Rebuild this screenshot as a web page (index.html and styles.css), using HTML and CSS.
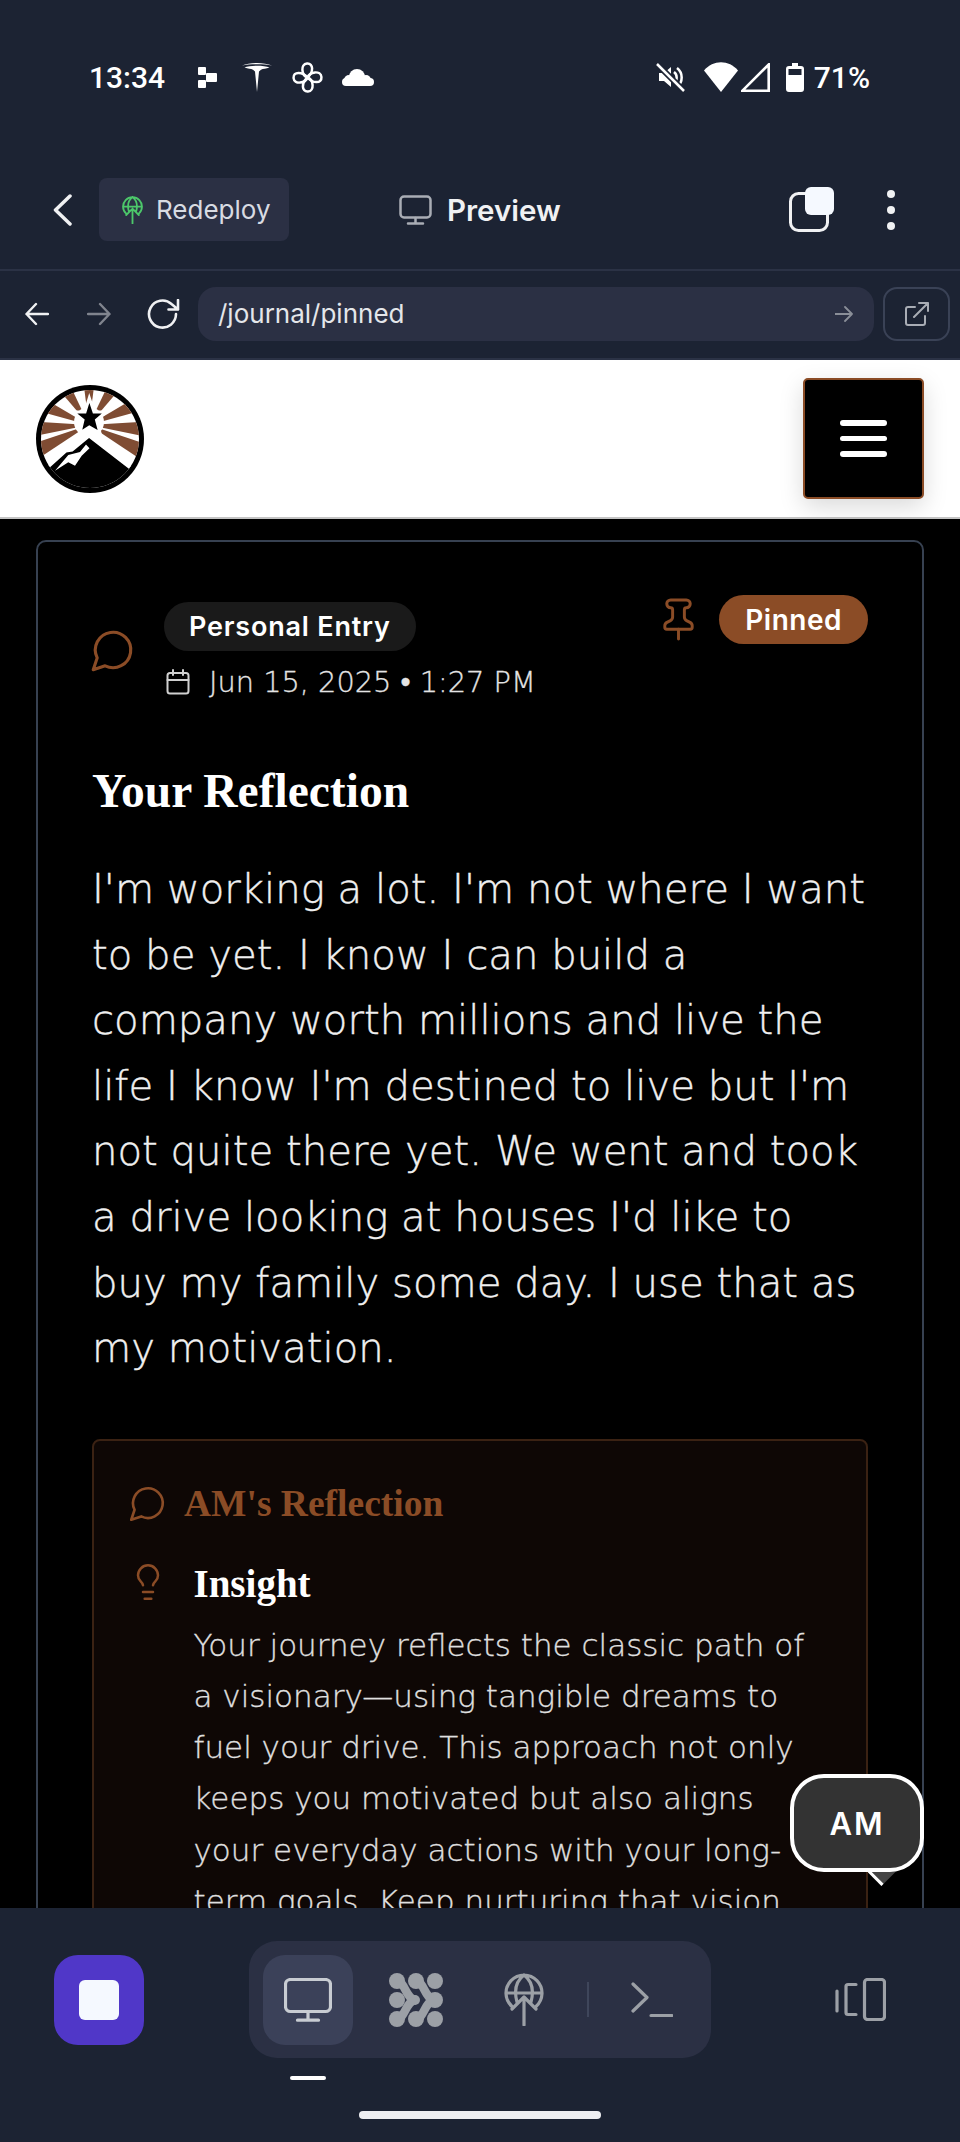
FILE: index.html
```html
<!DOCTYPE html>
<html lang="en">
<head>
    <meta charset="UTF-8">
    <meta name="viewport" content="width=device-width, initial-scale=1.0">
    <title>Journal - Pinned</title>
    <link rel="stylesheet" href="styles.css">
</head>
<body>
    <div class="status-bar">
        <div class="status-left">
            <span class="status-time">13:34</span>
            <svg class="st-blocks" width="19" height="21" viewBox="0 0 19 21"><rect x="0" y="0" width="8" height="8" rx="1"/><rect x="0" y="13" width="8" height="8" rx="1"/><rect x="8" y="6" width="11" height="9" rx="1"/></svg>
            <svg class="st-tesla" width="30" height="30" viewBox="0 0 30 30"><path d="M0 3.500C8 0 22 0 30 3.500 22 1.800 8 1.800 0 3.500z"/><path d="M2.500 5.500C8 3 22 3 27.500 5.500 24 6.800 21 6.500 19 7.800L17 9.500 15 30 13 9.500 11 7.800C9 6.500 6 6.800 2.500 5.500z"/></svg>
            <svg class="st-fan" width="31" height="31" viewBox="0 0 30 30"><path d="M15 15C9 13 8 2 14.500 1.500 21 1 21 10 15 15z"/><path d="M15 15C9 13 8 2 14.500 1.500 21 1 21 10 15 15z" transform="rotate(90 15 15)"/><path d="M15 15C9 13 8 2 14.500 1.500 21 1 21 10 15 15z" transform="rotate(180 15 15)"/><path d="M15 15C9 13 8 2 14.500 1.500 21 1 21 10 15 15z" transform="rotate(270 15 15)"/></svg>
            <svg class="st-cloud" width="32" height="17" viewBox="0 0 32 17"><rect x="0" y="9" width="32" height="8" rx="4"/><circle cx="15" cy="8" r="8"/><circle cx="24" cy="11" r="5"/><circle cx="7" cy="11" r="5"/></svg>
        </div>
        <div class="status-right">
            <svg class="st-mute" width="29" height="29" viewBox="0 0 29 29"><path class="st-fill" d="M3 10h5l7-6v20l-7-6H3z"/><path class="st-line" d="M18 9a7 7 0 0 1 0 11M21 5a12 12 0 0 1 0 19"/><path class="st-cut" d="M1 1l27 27"/><path class="st-line" d="M1 1l27 27"/></svg>
            <svg class="st-wifi" width="34" height="30" viewBox="0 0 34 30"><path d="M0 8.500C9-2.500 25-2.500 34 8.500L17 30z"/></svg>
            <svg class="st-signal" width="29" height="29" viewBox="0 0 29 29"><path d="M1.500 27.700L27.700 1.500V27.700z"/></svg>
            <svg class="st-battery" width="18" height="29" viewBox="0 0 18 29"><path d="M6 0h6v3h3a3 3 0 0 1 3 3v20a3 3 0 0 1-3 3H3a3 3 0 0 1-3-3V6a3 3 0 0 1 3-3h3z"/><rect class="st-window" x="2.500" y="6" width="13" height="6"/></svg>
            <span class="status-pct">71%</span>
        </div>
    </div>

    <div class="toolbar">
        <svg class="tb-back" width="19" height="32" viewBox="0 0 19 32"><path d="M17 2L2.500 16 17 30"/></svg>
        <div class="redeploy-chip">
            <svg class="globe-up" width="21" height="28" viewBox="0 0 40 53"><path d="M8 33.500A18 18 0 1 1 32 33.500M2 20H38M20 2C12 8 10 18 13 29M20 2C28 8 30 18 27 29M20 52V24M8 36L20 24 32 36"/></svg>
            <span>Redeploy</span>
        </div>
        <svg class="tb-monitor" width="33" height="30" viewBox="0 0 33 30"><rect x="1.500" y="1.500" width="30" height="21" rx="3.500"/><path d="M16.500 23v5M9 28.500h15"/></svg>
        <span class="tb-title">Preview</span>
        <svg class="tb-tabs" width="45" height="45" viewBox="0 0 45 45"><rect class="tabs-back" x="1.500" y="6.500" width="37" height="37" rx="8"/><rect class="tabs-front" x="16" y="0" width="29" height="28" rx="6"/></svg>
        <div class="tb-dots"><i></i><i></i><i></i></div>
    </div>

    <div class="address-row">
        <svg class="nav-arrow" width="24" height="24" viewBox="0 0 24 24"><path d="M23 12H1.500M11 2L1.500 12 11 22"/></svg>
        <svg class="nav-arrow nav-off" width="24" height="24" viewBox="0 0 24 24"><path d="M1 12h21.500M13 2l9.500 10L13 22"/></svg>
        <svg class="nav-reload" width="33" height="30" viewBox="0 0 33 30"><path d="M29 15A13.500 13.500 0 1 1 24.500 5L31 10.500M31 1v9.500H21.500"/></svg>
        <div class="url-pill">
            <span>/journal/pinned</span>
            <svg class="url-go" width="18" height="16" viewBox="0 0 18 16"><path d="M0 8h17M10 1l7 7-7 7"/></svg>
        </div>
        <div class="ext-btn">
            <svg width="24" height="24" viewBox="0 0 24 24"><path d="M10 5H3a2 2 0 0 0-2 2v14a2 2 0 0 0 2 2h15a2 2 0 0 0 2-2v-7M9 15L23 1M14 1h9v8"/></svg>
        </div>
    </div>

    <header class="site-header">
        <svg class="logo" width="108" height="108" viewBox="0 0 108 108">
            <defs><clipPath id="logoClip"><circle cx="54" cy="54" r="49"/></clipPath></defs>
            <circle cx="54" cy="54" r="54" fill="#000"/>
            <g clip-path="url(#logoClip)">
                <rect width="108" height="108" fill="#fff"/>
                <g fill="#7f4c33">
                    <path d="M53 40L43.900-29.400H62.100z"/>
                    <path d="M53 40L83.100-23.200 98.500-13.200z"/>
                    <path d="M53 40L22.900-23.200 7.500-13.200z"/>
                    <path d="M53 40L113.300 4.500 120.500 21.300z"/>
                    <path d="M53 40L-7.300 4.500-14.500 21.300z"/>
                    <path d="M53 40L122.900 35.700 121.600 54z"/>
                    <path d="M53 40L-16.900 35.700-15.600 54z"/>
                    <path d="M53 40L119.400 62.200 111.400 78.700z"/>
                    <path d="M53 40L-13.400 62.200-5.400 78.700z"/>
                </g>
                <circle cx="53" cy="37" r="15" fill="#fff"/>
                <path d="M53.300 13L58 27H70L60.500 35 64 48 53.300 42 44 48 47 35 37 27H49z" fill="#000" stroke="#fff" stroke-width="3"/>
                <path d="M53 51L97 85V115H10V84L30 66 36 65z" fill="#000" stroke="#fff" stroke-width="3"/>
                <path d="M19 85.700L32.300 70 44 67 50 59.500 53.500 63.300 45.700 70.700 39 80.700 32.300 77.300z" fill="#fff"/>
            </g>
        </svg>
        <button class="burger"><i></i><i></i><i></i></button>
    </header>

    <main class="page">
        <article class="entry-card">
            <div class="entry-meta">
                <div class="meta-left">
                    <svg class="brown-icon meta-icon" width="50" height="50" viewBox="0 0 24 24"><path d="M3 21l1.900-5.700a8.500 8.500 0 1 1 3.800 3.800z"/></svg>
                    <div class="meta-text">
                        <span class="type-pill">Personal Entry</span>
                        <div class="meta-date">
                            <svg class="cal-icon" width="24" height="26" viewBox="0 0 24 26"><rect x="1.500" y="4" width="21" height="20.500" rx="2.500"/><path d="M1.500 11h21M7 1v5M17 1v5"/></svg>
                            <span>Jun 15, 2025 • 1:27 PM</span>
                        </div>
                    </div>
                </div>
                <div class="meta-right">
                    <svg class="brown-icon pin-icon" width="47" height="47" viewBox="0 0 24 24"><path d="M12 17v5"/><path d="M9 10.760a2 2 0 0 1-1.110 1.790l-1.780.9A2 2 0 0 0 5 15.240V16a1 1 0 0 0 1 1h12a1 1 0 0 0 1-1v-.76a2 2 0 0 0-1.110-1.790l-1.780-.9A2 2 0 0 1 15 10.760V7a1 1 0 0 1 1-1 2 2 0 0 0 0-4H8a2 2 0 0 0 0 4 1 1 0 0 1 1 1z"/></svg>
                    <span class="pinned-pill">Pinned</span>
                </div>
            </div>

            <h2 class="entry-title">Your Reflection</h2>
            <p class="entry-body">I'm working a lot. I'm not where I want to be yet. I know I can build a company worth millions and live the life I know I'm destined to live but I'm not quite there yet. We went and took a drive looking at houses I'd like to buy my family some day. I use that as my motivation.</p>

            <section class="reflection-box">
                <div class="reflection-head">
                    <svg class="brown-icon head-icon" width="42" height="42" viewBox="0 0 24 24"><path d="M3 21l1.900-5.700a8.500 8.500 0 1 1 3.800 3.800z"/></svg>
                    <h3>AM's Reflection</h3>
                </div>
                <div class="insight">
                    <svg class="brown-icon bulb-icon" width="40" height="40" viewBox="0 0 24 24"><path d="M15 14c.2-1 .7-1.700 1.500-2.500 1-.9 1.500-2.200 1.500-3.500A6 6 0 0 0 6 8c0 1 .2 2.200 1.500 3.500.7.7 1.300 1.500 1.500 2.500"/><path d="M9 18h6M10 22h4"/></svg>
                    <div class="insight-text">
                        <h4>Insight</h4>
                        <p>Your journey reflects the classic path of a visionary—using tangible dreams to fuel your drive. This approach not only keeps you motivated but also aligns your everyday actions with your long-term goals. Keep nurturing that vision and let it guide each step you take.</p>
                    </div>
                </div>
            </section>
        </article>
        <div class="am-fab">AM</div>
    </main>

    <nav class="bottom-nav">
        <div class="nav-row">
            <div class="stop-btn"><i></i></div>
            <div class="tab-group">
                <div class="tab tab-active">
                    <svg class="tab-ico tab-monitor" width="48" height="44" viewBox="0 0 48 44"><rect x="1.500" y="1.500" width="45" height="32" rx="5"/><path d="M24 34v8M13.500 42.200h21"/></svg>
                </div>
                <div class="tab">
                    <svg class="agent-ico" width="54" height="54" viewBox="0 0 54 54">
                        <circle cx="8" cy="8" r="8"/><circle cx="27" cy="8" r="8"/><circle cx="46" cy="8" r="8"/>
                        <circle cx="8" cy="27" r="8"/><circle cx="26" cy="27" r="5"/><circle cx="46" cy="27" r="8"/>
                        <circle cx="8" cy="46" r="8"/><circle cx="27" cy="46" r="8"/><circle cx="46" cy="46" r="8"/>
                        <path class="agent-flow" d="M8 8C16 8 17 27 27 27 17 27 16 46 8 46"/>
                        <path class="agent-flow" d="M27 8C35 8 36 27 46 27 36 27 35 46 27 46"/>
                    </svg>
                </div>
                <div class="tab">
                    <svg class="tab-ico" width="40" height="53" viewBox="0 0 40 53"><path d="M8 33.500A18 18 0 1 1 32 33.500M2 20H38M20 2C12 8 10 18 13 29M20 2C28 8 30 18 27 29M20 52V24M8 36L20 24 32 36"/></svg>
                </div>
                <span class="tab-divider"></span>
                <div class="tab">
                    <svg class="tab-ico" width="42" height="36" viewBox="0 0 42 36"><path d="M2 2L16 15.500 2 29M20 33.500H41"/></svg>
                </div>
            </div>
            <svg class="tab-ico side-ico" width="51" height="43" viewBox="0 0 51 43"><rect x="29.500" y="1.500" width="20" height="40" rx="3"/><path d="M21 6.500H13a2 2 0 0 0-2 2v26a2 2 0 0 0 2 2h8M2 13v20"/></svg>
        </div>
        <div class="tab-marker"></div>
        <div class="home-bar"></div>
    </nav>
</body>
</html>
```

FILE: styles.css
```css
* {
    box-sizing: border-box;
}
html, body {
    margin: 0;
    height: 100%;
}
body {
    width: 960px;
    height: 2142px;
    display: flex;
    flex-direction: column;
    overflow: hidden;
    background-color: #000;
    font-family: Inter, "Liberation Sans", sans-serif;
    color: #fff;
}
svg {
    display: block;
    flex-shrink: 0;
}

/* status bar */
.status-bar {
    height: 152px;
    padding: 60px 90px 0 89px;
    display: flex;
    justify-content: space-between;
    align-items: flex-start;
    background-color: #1c2333;
}
.status-left, .status-right {
    display: flex;
    align-items: center;
    height: 34px;
}
.status-time, .status-pct {
    font-family: Roboto, sans-serif;
    font-size: 30px;
    font-weight: 500;
    color: #fff;
}
.st-blocks, .st-tesla, .st-cloud, .st-wifi, .st-battery {
    fill: #fff;
}
.st-blocks {
    margin-left: 33px;
}
.st-tesla {
    margin-left: 25px;
}
.st-fan {
    margin-left: 20px;
    fill: none;
    stroke: #fff;
    stroke-width: 2.4;
}
.st-cloud {
    margin-left: 19px;
}
.st-mute .st-fill {
    fill: #fff;
}
.st-mute .st-line {
    fill: none;
    stroke: #fff;
    stroke-width: 2.5;
}
.st-mute .st-cut {
    fill: none;
    stroke: #1c2333;
    stroke-width: 6;
}
.st-wifi {
    margin-left: 19px;
}
.st-signal {
    margin-left: 3px;
    fill: none;
    stroke: #fff;
    stroke-width: 2.6;
}
.st-battery {
    margin-left: 16px;
}
.st-window {
    fill: #1c2333;
}
.status-pct {
    margin-left: 10px;
}

/* replit toolbar */
.toolbar {
    height: 119px;
    padding: 0 65px 2px 53px;
    display: flex;
    align-items: center;
    background-color: #1c2333;
    border-bottom: 2px solid #2b3245;
}
.tb-back {
    fill: none;
    stroke: #f0f1f3;
    stroke-width: 3.5;
    stroke-linecap: round;
    stroke-linejoin: round;
}
.redeploy-chip {
    margin-left: 27px;
    width: 190px;
    height: 63px;
    padding-left: 23px;
    display: flex;
    align-items: center;
    gap: 13px;
    background-color: #2b3044;
    border-radius: 8px;
    font-size: 26px;
    color: #d8dbe2;
}
.globe-up {
    fill: none;
    stroke: #4cc76a;
    stroke-width: 3.5;
    stroke-linecap: round;
}
.tb-monitor {
    margin-left: 110px;
    fill: none;
    stroke: #a9adb5;
    stroke-width: 2.5;
    stroke-linecap: round;
}
.tb-title {
    margin-left: 15px;
    font-size: 29.5px;
    font-weight: 600;
    color: #f0f1f3;
}
.tb-tabs {
    margin-left: auto;
}
.tabs-back {
    fill: none;
    stroke: #f0f1f3;
    stroke-width: 3;
}
.tabs-front {
    fill: #f5f9ff;
}
.tb-dots {
    margin-left: 53px;
    display: flex;
    flex-direction: column;
    gap: 8px;
}
.tb-dots i {
    width: 8px;
    height: 8px;
    border-radius: 50%;
    background-color: #f0f1f3;
}

/* address row */
.address-row {
    height: 89px;
    padding: 0 10px 2px 25px;
    display: flex;
    align-items: center;
    background-color: #1c2333;
    border-bottom: 2px solid #2b3245;
}
.nav-arrow {
    fill: none;
    stroke: #f0f1f3;
    stroke-width: 2.4;
    stroke-linecap: round;
    stroke-linejoin: round;
}
.nav-off {
    margin-left: 38px;
    stroke: #80848e;
}
.nav-reload {
    margin-left: 36px;
    fill: none;
    stroke: #f0f1f3;
    stroke-width: 2.6;
    stroke-linecap: round;
    stroke-linejoin: round;
}
.url-pill {
    margin-left: 18px;
    width: 676px;
    height: 54px;
    padding: 0 21px 0 20px;
    display: flex;
    align-items: center;
    justify-content: space-between;
    background-color: #2b3044;
    border-radius: 18px;
    font-size: 26px;
    color: #e4e6ea;
}
.url-go {
    fill: none;
    stroke: #8a8e98;
    stroke-width: 1.8;
    stroke-linecap: round;
    stroke-linejoin: round;
}
.ext-btn {
    margin-left: 9px;
    width: 67px;
    height: 54px;
    display: flex;
    align-items: center;
    justify-content: center;
    border: 2px solid #3a4256;
    border-radius: 14px;
}
.ext-btn svg {
    fill: none;
    stroke: #a9adb5;
    stroke-width: 2;
    stroke-linecap: round;
    stroke-linejoin: round;
}

/* site header */
.site-header {
    height: 159px;
    padding: 0 36px;
    display: flex;
    align-items: center;
    justify-content: space-between;
    background-color: #fff;
    border-bottom: 2px solid #c4c4c4;
    position: relative;
    z-index: 2;
}
.burger {
    width: 121px;
    height: 121px;
    padding: 0;
    display: flex;
    flex-direction: column;
    align-items: center;
    justify-content: center;
    gap: 10px;
    background-color: #000;
    border: 2px solid #8b4c26;
    border-radius: 5px;
    box-shadow: 0 8px 24px rgba(0,0,0,0.15);
}
.burger i {
    width: 47px;
    height: 5.5px;
    border-radius: 3px;
    background-color: #fff;
}

/* journal page */
.page {
    flex: 1;
    min-height: 0;
    padding: 21px 36px 0;
    position: relative;
    z-index: 0;
    overflow: hidden;
    background-color: #000;
}
.entry-card {
    padding: 53px 54px 60px;
    border: 2px solid #374151;
    border-radius: 10px;
}
.entry-meta {
    display: flex;
    justify-content: space-between;
    align-items: flex-start;
}
.meta-left {
    padding-top: 7px;
    display: flex;
    align-items: center;
    gap: 27px;
}
.brown-icon {
    fill: none;
    stroke: #8b4c26;
    stroke-width: 1.5;
    stroke-linecap: round;
    stroke-linejoin: round;
}
.meta-icon {
    margin-left: -5px;
}
.meta-text {
    display: flex;
    flex-direction: column;
    align-items: flex-start;
    gap: 14px;
}
.type-pill {
    height: 49px;
    padding: 0 25px;
    display: flex;
    align-items: center;
    background-color: #1a1a1a;
    border-radius: 25px;
    font-size: 27px;
    font-weight: 600;
    letter-spacing: 0.8px;
    color: #fff;
}
.meta-date {
    margin-left: 2px;
    display: flex;
    align-items: center;
    gap: 19px;
    font-family: "DejaVu Sans", sans-serif;
    font-size: 28.8px;
    font-weight: 200;
    -webkit-text-stroke: 0.3px #e4e4e4;
    color: #e4e4e4;
}
.cal-icon {
    fill: none;
    stroke: #d0d0d0;
    stroke-width: 2;
    stroke-linecap: round;
}
.meta-right {
    display: flex;
    align-items: center;
    gap: 17px;
}
.pinned-pill {
    height: 49px;
    padding: 0 26px;
    display: flex;
    align-items: center;
    background-color: #8b4c26;
    border-radius: 25px;
    font-size: 28px;
    font-weight: 600;
    letter-spacing: 0.5px;
    color: #fff;
}
.entry-title {
    margin: 62px 0 0;
    font-family: "Liberation Serif", serif;
    font-size: 47.5px;
    font-weight: 700;
    line-height: 60px;
    color: #fff;
}
.entry-body {
    margin: 36px 0 0;
    font-family: "DejaVu Sans", sans-serif;
    font-size: 40.2px;
    font-weight: 200;
    line-height: 65.6px;
    -webkit-text-stroke: 0.4px #f0f0f0;
    color: #f0f0f0;
}
.reflection-box {
    margin-top: 57px;
    padding: 41px 37px 60px;
    background-color: #0e0705;
    border: 2px solid #3b2213;
    border-radius: 8px;
}
.reflection-head {
    display: flex;
    align-items: center;
    gap: 16px;
}
.head-icon {
    margin-left: -5px;
}
.reflection-head h3 {
    margin: 0;
    font-family: "Liberation Serif", serif;
    font-size: 37.5px;
    font-weight: 700;
    line-height: 44px;
    color: #8b4c26;
}
.insight {
    margin-top: 36px;
    display: flex;
    align-items: flex-start;
    gap: 26px;
}
.bulb-icon {
    margin-left: -3.5px;
}
.insight-text h4 {
    margin: 0;
    font-family: "Liberation Serif", serif;
    font-size: 39px;
    font-weight: 700;
    line-height: 44px;
    color: #fff;
}
.insight-text p {
    margin: 14px 0 0;
    font-family: "DejaVu Sans", sans-serif;
    font-size: 31px;
    font-weight: 200;
    line-height: 51.2px;
    -webkit-text-stroke: 0.3px #e0e0e0;
    color: #e0e0e0;
}
.am-fab {
    position: absolute;
    right: 36px;
    bottom: 36px;
    width: 134px;
    height: 98px;
    display: flex;
    align-items: center;
    justify-content: center;
    background-color: #333;
    border: 4px solid #fff;
    border-radius: 34px;
    font-size: 31px;
    font-weight: 600;
    letter-spacing: 2px;
    color: #fff;
}
.am-fab::after {
    content: "";
    position: absolute;
    right: 27.5px;
    bottom: -13.5px;
    width: 21px;
    height: 21px;
    transform: rotate(45deg);
    background-color: #444;
    border-bottom: 3px solid #fff;
    z-index: -1;
}

/* bottom nav */
.bottom-nav {
    height: 234px;
    padding-top: 33px;
    display: flex;
    flex-direction: column;
    background-color: #1c2333;
    position: relative;
    z-index: 2;
}
.nav-row {
    height: 117px;
    padding-left: 54px;
    display: flex;
    align-items: center;
}
.stop-btn {
    width: 90px;
    height: 90px;
    display: flex;
    align-items: center;
    justify-content: center;
    background-color: #5037c8;
    border-radius: 24px;
}
.stop-btn i {
    width: 40px;
    height: 40px;
    background-color: #f5f9ff;
    border-radius: 6px;
}
.tab-group {
    margin-left: 105px;
    width: 462px;
    height: 117px;
    padding-left: 14px;
    display: flex;
    align-items: center;
    gap: 18px;
    background-color: #2b3044;
    border-radius: 28px;
}
.tab {
    width: 90px;
    height: 90px;
    display: flex;
    align-items: center;
    justify-content: center;
    border-radius: 22px;
}
.tab-active {
    background-color: #3b4159;
}
.tab-ico {
    fill: none;
    stroke: #9ca0a6;
    stroke-width: 3.2;
    stroke-linecap: round;
    stroke-linejoin: round;
}
.tab-monitor {
    stroke: #c8ccd2;
}
.agent-ico {
    fill: #9ca0a6;
}
.agent-flow {
    fill: none;
    stroke: #9ca0a6;
    stroke-width: 8.5;
}
.tab-divider {
    width: 2px;
    height: 35px;
    background-color: #3f465b;
}
.side-ico {
    margin-left: 124px;
}
.tab-marker {
    margin: 18px 0 0 290px;
    width: 36px;
    height: 4px;
    border-radius: 2px;
    background-color: #fff;
}
.home-bar {
    margin: 31px 0 0 359px;
    width: 242px;
    height: 8px;
    border-radius: 4px;
    background-color: #eeeff2;
}
```
